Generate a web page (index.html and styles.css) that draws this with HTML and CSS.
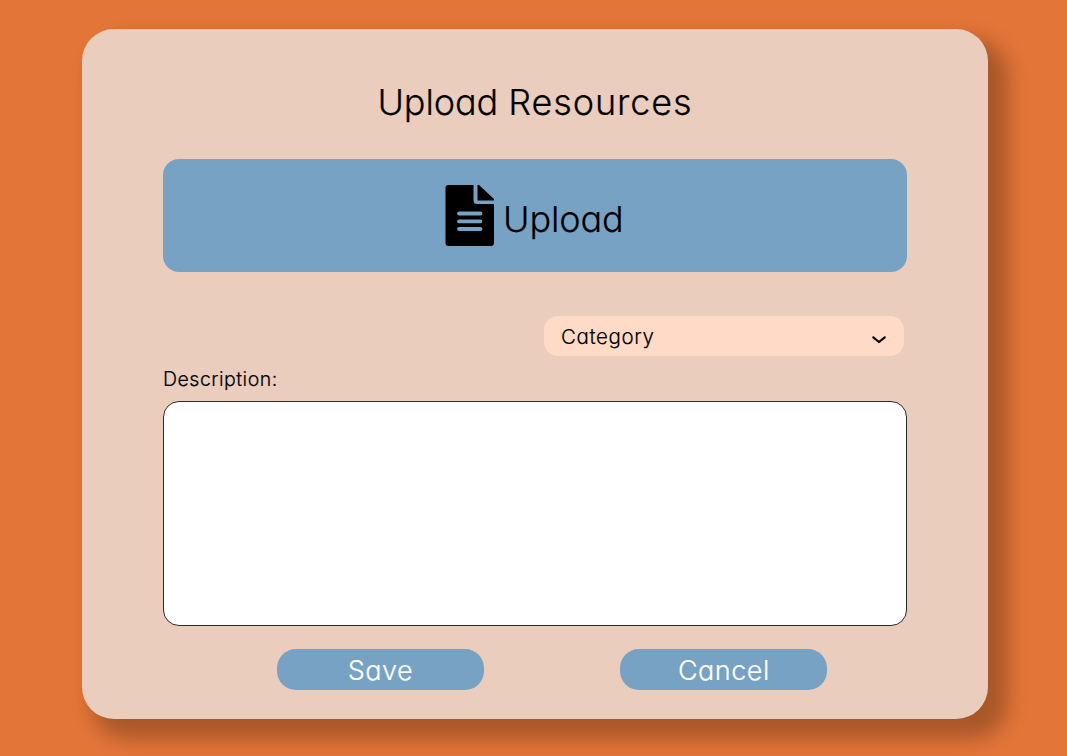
FILE: index.html
```html
<!DOCTYPE html>
<html lang="en">
<head>
<meta charset="utf-8">
<title>Upload Resources</title>
<link rel="stylesheet" href="styles.css">
</head>
<body>
<main class="card">
  <h1 class="title">Upload <span class="title-wide">Resources</span></h1>
  <button class="upload" type="button">
    <svg class="file-icon" width="49" height="61" viewBox="0 0 49 61" aria-hidden="true">
      <path d="M3 0H28.500V15.500Q28.500 19 32 19H49V58Q49 61 46 61H3.500Q.5 61 .5 58V3Q.5 0 3.500 0Z"/>
      <path d="M32.500 0H34L49 14V15.500H32.500Z"/>
      <path class="lines" d="M14 28.500H35.500M14 36.300H35.500M14 44H35.500"/>
    </svg>
    <span class="upload-text">Upload</span>
  </button>
  <button class="category" type="button">
    <span class="category-text">Category</span>
    <svg class="chevron" width="16" height="10" viewBox="0 0 16 10" aria-hidden="true"><path d="M2.300 2.300L8 7L13.700 2.300"/></svg>
  </button>
  <label class="label" for="description"><span>Description:</span></label>
  <textarea class="description" id="description"></textarea>
  <div class="actions">
    <button class="action save" type="button"><span>Save</span></button>
    <button class="action cancel" type="button"><span>Cancel</span></button>
  </div>
</main>
</body>
</html>
```
FILE: styles.css
```css
* { box-sizing: border-box; }
body {
  margin: 0;
  height: 756px;
  padding: 29px 79px 0 82px;
  overflow: hidden;
  background: #e37538;
  color: #000;
  font-family: Inter, "Open Sans", sans-serif;
  font-feature-settings: "cv11";
  font-weight: 300;
  -webkit-text-stroke: .2px currentColor;
}
button, textarea { font: inherit; font-feature-settings: inherit; color: inherit; border: 0; margin: 0; padding: 0; }
.card {
  display: flex;
  flex-direction: column;
  height: 690px;
  padding: 50px 81px 0;
  border-radius: 32px;
  background: #eacdbd;
  box-shadow: 15px 15px 20px 5px rgba(0, 0, 0, .26);
}
.title { margin: 0 0 34px; height: 46px; line-height: 46px; text-align: center; font-size: 36px; font-weight: 300; letter-spacing: -.1px; }
.title-wide { letter-spacing: .9px; }
.upload {
  display: flex;
  align-items: flex-start;
  height: 113px;
  padding: 26px 0 0 282px;
  gap: 9px;
  border-radius: 16px;
  background: #77a2c4;
}
.file-icon { flex: none; }
.lines { fill: none; stroke: #77a2c4; stroke-width: 3.800; stroke-linecap: round; }
.upload-text { font-size: 36px; line-height: 46px; padding-top: 11px; letter-spacing: -.1px; }
.category {
  display: flex;
  align-items: center;
  justify-content: space-between;
  align-self: flex-end;
  width: 360px;
  height: 40px;
  margin: 44px 3px 0 0;
  padding: 0 17px;
  border-radius: 14px;
  background: #ffdbc7;
}
.category-text { font-size: 20.500px; letter-spacing: .6px; }
.chevron { margin-top: 8px; fill: none; stroke: #000; stroke-width: 2.200; stroke-linecap: round; stroke-linejoin: round; }
.label { height: 45px; padding-top: 11px; line-height: 24px; font-size: 19.500px; letter-spacing: .5px; }
.description { height: 225px; border: 1px solid #302a27; border-radius: 16px; background: #fff; resize: none; }
.actions { display: flex; gap: 136.400px; margin: 23px 0 0 114px; }
.action { width: 207px; height: 41px; padding-top: 1px; border-radius: 19px; background: #77a2c4; color: #fff; font-size: 27px; line-height: 41px; letter-spacing: .5px; }
```
